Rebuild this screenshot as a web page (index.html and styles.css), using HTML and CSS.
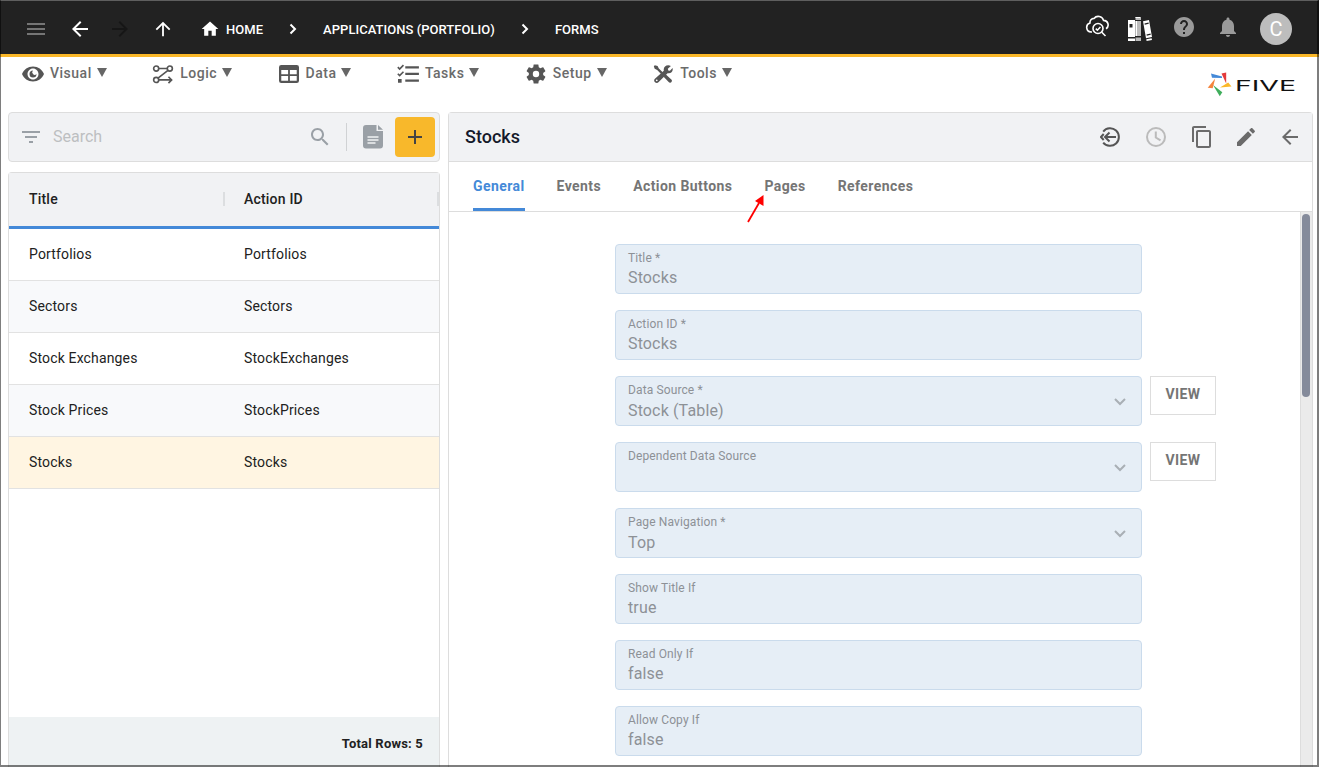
FILE: index.html
```html
<!DOCTYPE html>
<html lang="en">
<head>
    <meta charset="UTF-8">
    <meta name="viewport" content="width=device-width, initial-scale=1.0">
    <title>Five | Forms</title>
    <link rel="stylesheet" href="styles.css">
</head>
<body>
    <header class="topbar">
        <svg class="icon icon-menu" viewBox="0 0 24 24"><path d="M3 18h18v-2H3v2zm0-5h18v-2H3v2zm0-7v2h18V6H3z"/></svg>
        <svg class="icon icon-back" viewBox="0 0 24 24"><path d="M20 11H7.83l5.59-5.59L12 4l-8 8 8 8 1.41-1.41L7.83 13H20v-2z"/></svg>
        <svg class="icon icon-forward" viewBox="0 0 24 24"><path d="M12 4l-1.41 1.41L16.17 11H4v2h12.17l-5.58 5.59L12 20l8-8z"/></svg>
        <svg class="icon icon-up" viewBox="0 0 24 24"><path d="M4 12l1.41 1.41L11 7.83V20h2V7.83l5.58 5.59L20 12l-8-8-8 8z"/></svg>
        <nav class="crumbs">
            <svg class="icon-home" viewBox="0 0 24 24"><path d="M10 20v-6h4v6h5v-8h3L12 3 2 12h3v8z"/></svg>
            <a class="crumb">HOME</a>
            <svg class="crumb-arrow" viewBox="0 0 8 12"><path d="M1.5 1.5L6 6l-4.500 4.500"/></svg>
            <a class="crumb">APPLICATIONS (PORTFOLIO)</a>
            <svg class="crumb-arrow" viewBox="0 0 8 12"><path d="M1.500 1.500L6 6l-4.500 4.500"/></svg>
            <a class="crumb">FORMS</a>
        </nav>
        <div class="topbar-right">
            <svg class="icon-cloud" viewBox="0 0 24 24">
                <path d="M7 18H6a4.600 4.600 0 0 1-1-9 4 4 0 0 1 4-4.600 5.500 5.500 0 0 1 9.500 2 4.500 4.500 0 0 1 2.500 8.300"/>
                <circle cx="13" cy="14.500" r="5"/>
                <path d="M10.800 14.600l1.600 1.600 3-3.200M16.800 18.300l3.700 3.700"/>
            </svg>
            <svg class="icon-books" viewBox="0 0 24 24">
                <path fill="#fff" d="M0 3h7v17H0zM0 21.500h7V24H0zM15 4.300l6-1.300 3 17-6 1.300zM18.300 22.300l5.300-1.100.4 1.800-5.400 1z"/>
                <path fill="#bbb" d="M7.500 0h5.500v3H7.500zM7.500 4h5.500v15H7.500zM7.500 20.500h5.500V24H7.500z"/>
                <path fill="#fff" d="M7.500 0h4.500v1H7.500zM7.500 4h1.500v15H7.500z"/>
                <path fill="#222" d="M1.500 7h3v3.500h-3zM16.500 6.500l4-.9.3 1.200-4 .9zM18.500 17.500l4-.9.300 1.200-4 .9z"/>
            </svg>
            <svg class="icon icon-help" viewBox="0 0 24 24"><path d="M12 2C6.480 2 2 6.480 2 12s4.480 10 10 10 10-4.480 10-10S17.520 2 12 2zm1 17h-2v-2h2v2zm2.070-7.750l-.9.920C13.450 12.900 13 13.500 13 15h-2v-.5c0-1.100.45-2.100 1.170-2.830l1.240-1.260c.37-.36.590-.86.590-1.410 0-1.100-.9-2-2-2s-2 .9-2 2H8c0-2.210 1.790-4 4-4s4 1.790 4 4c0 .88-.36 1.680-.93 2.250z"/></svg>
            <svg class="icon icon-bell" viewBox="0 0 24 24"><path d="M12 22c1.100 0 2-.9 2-2h-4c0 1.100.89 2 2 2zm6-6v-5c0-3.070-1.640-5.640-4.500-6.320V4c0-.83-.67-1.500-1.500-1.500s-1.500.67-1.500 1.500v.68C7.630 5.360 6 7.920 6 11v5l-2 2v1h16v-1l-2-2z"/></svg>
            <div class="avatar">C</div>
        </div>
    </header>

    <div class="menubar">
        <div class="menu-item">
            <svg class="menu-icon" viewBox="1 2 22 20"><path d="M12 4.500C7 4.500 2.730 7.610 1 12c1.730 4.390 6 7.500 11 7.500s9.270-3.110 11-7.500c-1.730-4.390-6-7.500-11-7.500zM12 17.500c-3 0-5.500-2.500-5.500-5.500s2.500-5.500 5.500-5.500 5.500 2.500 5.500 5.500-2.500 5.500-5.500 5.500zm0-9a3.500 3.500 0 1 0 3.500 3.500 2 2 0 0 1-3.500-3.500z"/></svg>
            <span>Visual</span><i class="caret"></i>
        </div>
        <div class="menu-item">
            <svg class="menu-icon line" viewBox="1 1 23 22">
                <circle cx="5" cy="6" r="2.800"/><circle cx="20" cy="6" r="2.800"/><circle cx="5" cy="18.500" r="2.800"/>
                <path d="M8 6h9M18 8L7 16.500M8 18.500h14M18.500 15l3.500 3.500-3.500 3.500"/>
            </svg>
            <span>Logic</span><i class="caret"></i>
        </div>
        <div class="menu-item">
            <svg class="menu-icon" viewBox="0 1 24 22"><path fill-rule="evenodd" d="M3.500 2h17A2.500 2.500 0 0 1 23 4.500v15a2.500 2.500 0 0 1-2.500 2.500h-17A2.500 2.500 0 0 1 1 19.500v-15A2.500 2.500 0 0 1 3.500 2zM3.500 7.500v4.700H11V7.500zM13 7.500v4.700h7.500V7.500zM3.500 14.300v5H11v-5zM13 14.300v5h7.500v-5z"/></svg>
            <span>Data</span><i class="caret"></i>
        </div>
        <div class="menu-item">
            <svg class="menu-icon" viewBox="0 1.500 24 22"><path d="M9 4h15v2.500H9zM9 11h15v2.500H9zM9 18.500h15V21H9zM1 18h4v4H1z"/><path class="tick" d="M.8 5l2 2L7 2.800M.8 12.200l2 2L7 10"/></svg>
            <span>Tasks</span><i class="caret"></i>
        </div>
        <div class="menu-item">
            <svg class="menu-icon gear" viewBox="2 2 20 20"><path d="M19.140 12.940c.04-.3.060-.61.060-.94 0-.32-.02-.64-.07-.94l2.030-1.580c.18-.14.230-.41.120-.61l-1.920-3.320c-.12-.22-.37-.29-.59-.22l-2.390.96c-.5-.38-1.030-.7-1.620-.94l-.36-2.540c-.04-.24-.24-.41-.48-.41h-3.840c-.24 0-.43.17-.47.41l-.36 2.540c-.59.24-1.130.57-1.620.94l-2.390-.96c-.22-.08-.47 0-.59.220L2.740 8.870c-.12.210-.08.470.12.610l2.030 1.580c-.05.300-.09.630-.09.940s.02.640.07.940l-2.030 1.580c-.18.140-.23.410-.12.610l1.920 3.320c.12.220.37.290.59.220l2.390-.96c.5.380 1.030.7 1.620.94l.36 2.540c.05.240.24.410.48.410h3.840c.24 0 .44-.17.470-.41l.36-2.540c.59-.24 1.130-.56 1.620-.94l2.390.96c.22.080.47 0 .59-.22l1.920-3.320c.12-.22.070-.47-.12-.61l-2.010-1.580zM12 15.200A3.200 3.200 0 1 1 12 8.800a3.200 3.200 0 0 1 0 6.400z"/></svg>
            <span>Setup</span><i class="caret"></i>
        </div>
        <div class="menu-item">
            <svg class="menu-icon" viewBox="0 0 24 24">
                <path d="M2.200 1.500L5.500 2.300 7 5.300l5 5-2 2-5-5-3-1.500L1 2.700zM14 13l1.500-.5 6.800 6.300c1.500 1.700-1.300 4.800-3.200 3.200L13 15.500z"/>
                <path fill-rule="evenodd" d="M21.500 2.300l-3.700 3.500.500 2 2 .4 3.200-3.400c1 4.500-2.500 7.200-6 6.200L6.500 22c-2.200 2.300-6.800-1-4.500-4L13 8c-1-4.500 3.500-8 8.500-5.700zM4.500 18.500a1.100 1.100 0 1 0 0 2.200 1.100 1.100 0 0 0 0-2.200z"/>
            </svg>
            <span>Tools</span><i class="caret"></i>
        </div>
        <svg class="logo" viewBox="0 0 90 26">
            <path fill="#4489d8" d="M4 2.500l11 3v1.500L5 6.800z"/>
            <path fill="#e33b3b" d="M14.500 2.500L19.200 1.500v11z"/>
            <path fill="#fbb829" d="M24.500 15.500l-3.300-4-8.200 5z"/>
            <path fill="#3fae5c" d="M6 14l9.300 7.200-2.500 4z"/>
            <path fill="#f5843c" d="M8.200 7.500L.700 16.800l5 .5z"/>
            <text x="28" y="19.500" textLength="61" lengthAdjust="spacingAndGlyphs">FIVE</text>
        </svg>
    </div>

    <main class="content">
        <section class="list">
            <div class="searchbar">
                <svg class="icon icon-filter" viewBox="0 0 24 24"><path d="M10 18h4v-2h-4v2zM3 6v2h18V6H3zm3 7h12v-2H6v2z"/></svg>
                <input type="text" class="search-input" placeholder="Search">
                <svg class="icon icon-search" viewBox="0 0 24 24"><path d="M15.500 14h-.79l-.28-.27C15.410 12.590 16 11.110 16 9.500 16 5.910 13.090 3 9.500 3S3 5.910 3 9.500 5.910 16 9.500 16c1.610 0 3.090-.59 4.230-1.570l.27.280v.79l5 4.990L20.490 19l-4.990-5zm-6 0C7.010 14 5 11.990 5 9.500S7.010 5 9.500 5 14 7.010 14 9.500 11.990 14 9.500 14z"/></svg>
                <div class="divider"></div>
                <svg class="icon-doc" viewBox="0 0 20 24"><path d="M3 0h10.500v6H20v14.500a3 3 0 0 1-3 3H3a3 3 0 0 1-3-3V3a3 3 0 0 1 3-3z"/><path d="M15 0l5 4.800h-5z"/><path class="doc-lines" d="M4.500 12h11M4.500 15h11M4.500 18h8"/></svg>
                <button class="add-button"><svg viewBox="0 0 14 14"><path d="M7 0v14M0 7h14"/></svg></button>
            </div>
            <div class="grid">
                <div class="grid-row grid-head"><span>Title</span><span>Action ID</span></div>
                <div class="grid-row"><span>Portfolios</span><span>Portfolios</span></div>
                <div class="grid-row alt"><span>Sectors</span><span>Sectors</span></div>
                <div class="grid-row"><span>Stock Exchanges</span><span>StockExchanges</span></div>
                <div class="grid-row alt"><span>Stock Prices</span><span>StockPrices</span></div>
                <div class="grid-row selected"><span>Stocks</span><span>Stocks</span></div>
                <div class="grid-footer">Total Rows: 5</div>
            </div>
        </section>

        <section class="detail">
            <div class="detail-head">
                <h1>Stocks</h1>
                <div class="actions">
                    <svg class="act-return" viewBox="0 0 20 20"><path d="M3.200 4.500A8.800 8.800 0 1 1 3.200 15.500M16 10H5M9.500 5.500L5 10l4.500 4.500M3.700 7L1 10l2.700 3"/></svg>
                    <svg class="act-clock" viewBox="0 0 20 20"><circle cx="10" cy="10" r="9"/><path d="M9.800 4.500v6l4.700 2.800"/></svg>
                    <svg class="icon act-copy" viewBox="0 0 24 24"><path d="M16 1H4c-1.100 0-2 .9-2 2v14h2V3h12V1zm3 4H8c-1.100 0-2 .9-2 2v14c0 1.100.9 2 2 2h11c1.100 0 2-.9 2-2V7c0-1.100-.9-2-2-2zm0 16H8V7h11v14z"/></svg>
                    <svg class="icon act-edit" viewBox="0 0 24 24"><path d="M3 17.250V21h3.750L17.810 9.940l-3.750-3.750L3 17.250zM20.710 7.040c.39-.39.390-1.020 0-1.410l-2.340-2.340c-.39-.39-1.020-.39-1.410 0l-1.830 1.830 3.750 3.750 1.830-1.830z"/></svg>
                    <svg class="icon act-back" viewBox="0 0 24 24"><path d="M20 11H7.830l5.590-5.590L12 4l-8 8 8 8 1.410-1.410L7.830 13H20v-2z"/></svg>
                </div>
            </div>
            <div class="tabs">
                <a class="tab active">General</a>
                <a class="tab">Events</a>
                <a class="tab">Action Buttons</a>
                <a class="tab">Pages
                    <svg class="pointer" viewBox="0 0 18 30"><path d="M1 28L12 9" stroke="#f00" stroke-width="1.800"/><path d="M16.500 1v11L8 7z" fill="#f00"/></svg>
                </a>
                <a class="tab">References</a>
            </div>
            <div class="form-area">
                <form class="form">
                    <div class="field-row"><div class="field"><label>Title *</label><p>Stocks</p></div></div>
                    <div class="field-row"><div class="field"><label>Action ID *</label><p>Stocks</p></div></div>
                    <div class="field-row">
                        <div class="field select"><label>Data Source *</label><p>Stock (Table)</p><svg class="chevron" viewBox="0 0 12 8"><path d="M1 1l5 5 5-5"/></svg></div>
                        <button type="button" class="view-button">VIEW</button>
                    </div>
                    <div class="field-row">
                        <div class="field select"><label>Dependent Data Source</label><p></p><svg class="chevron" viewBox="0 0 12 8"><path d="M1 1l5 5 5-5"/></svg></div>
                        <button type="button" class="view-button">VIEW</button>
                    </div>
                    <div class="field-row"><div class="field select"><label>Page Navigation *</label><p>Top</p><svg class="chevron" viewBox="0 0 12 8"><path d="M1 1l5 5 5-5"/></svg></div></div>
                    <div class="field-row"><div class="field"><label>Show Title If</label><p>true</p></div></div>
                    <div class="field-row"><div class="field"><label>Read Only If</label><p>false</p></div></div>
                    <div class="field-row"><div class="field"><label>Allow Copy If</label><p>false</p></div></div>
                </form>
                <div class="scrollbar"><div class="thumb"></div></div>
            </div>
        </section>
    </main>
    <div class="frame"></div>
</body>
</html>
```
FILE: styles.css
```css
* {
    box-sizing: border-box;
}

body {
    margin: 0;
    height: 767px;
    display: flex;
    flex-direction: column;
    overflow: hidden;
    position: relative;
    background-color: #fff;
    font-family: Roboto, "Liberation Sans", sans-serif;
    color: #212121;
}

svg {
    display: block;
    flex: none;
}

.icon {
    width: 24px;
    height: 24px;
    fill: currentColor;
}

/* window outline, drawn over everything */
.frame {
    position: absolute;
    inset: 0;
    border: solid rgba(0, 0, 0, 0.5);
    border-width: 0 2px 2px 1px;
    border-top: 1px solid #5f5f5f;
    pointer-events: none;
}

/* top bar */
.topbar {
    flex: none;
    height: 57px;
    padding: 1px 27px 0 24px;
    display: flex;
    align-items: center;
    background-color: #222;
    border-bottom: 3px solid #fbb829;
    color: #fff;
}

.topbar .icon {
    margin-top: 2px;
}

.icon-menu {
    color: #757575;
    margin-right: 20px;
}

.icon-back {
    margin-right: 16px;
}

.icon-forward {
    color: #161616;
    margin-right: 19px;
}

.topbar .icon-up {
    width: 22px;
    height: 22px;
    margin-left: 1px;
}

.crumbs {
    display: flex;
    align-items: center;
    margin: 3px 0 0 26px;
    font-size: 13px;
    font-weight: 500;
    letter-spacing: 0.04px;
}

.icon-home {
    width: 20px;
    height: 20px;
    fill: #fff;
    margin-right: 6px;
}

.crumb-arrow {
    width: 8px;
    height: 12px;
    margin: 0 26px;
    fill: none;
    stroke: #fff;
    stroke-width: 2;
}

.topbar-right {
    margin-left: auto;
    display: flex;
    align-items: center;
}

.icon-cloud {
    width: 24px;
    height: 24px;
    margin: 0 19px 4px 0;
    fill: none;
    stroke: #fff;
    stroke-width: 1.6;
}

.icon-books {
    width: 24px;
    height: 24px;
    margin: 2px 20px 0 0;
}

.topbar .icon-help,
.topbar .icon-bell {
    color: #9a9a9a;
    margin: 0 20px 2px 0;
}

.avatar {
    width: 32px;
    height: 32px;
    margin-top: 3px;
    border-radius: 50%;
    background-color: #bdbdbd;
    color: #fff;
    font-size: 20px;
    line-height: 33px;
    text-align: center;
}

/* menu */
.menubar {
    flex: none;
    height: 55px;
    padding: 5px 22px 0;
    display: flex;
    align-items: flex-start;
}

.menu-item {
    display: flex;
    align-items: center;
    height: 21px;
    margin-right: 45px;
    font-size: 14px;
    font-weight: 500;
    letter-spacing: 0.5px;
    color: #6b6b6b;
}

.menu-icon {
    width: 22px;
    height: 20px;
    margin: 3px 6px 0 0;
    fill: #555;
}

.menu-icon.line,
.menu-icon .tick {
    fill: none;
    stroke: #555;
    stroke-width: 1.8;
}

.caret {
    margin-left: 5px;
    border: 5px solid transparent;
    border-top: 9px solid #666;
    border-bottom: 0;
}

.menu-item + .menu-item {
    margin-left: 0.5px;
}

.logo {
    width: 90px;
    height: 26px;
    margin: 9px 0 0 auto;
}

.logo text {
    font-family: Inter, sans-serif;
    font-size: 14px;
    fill: #111;
}

/* content */
.content {
    flex: 1;
    min-height: 0;
    display: flex;
    gap: 8px;
    padding: 0 6px 0 8px;
}

.list {
    width: 432px;
    display: flex;
    flex-direction: column;
    gap: 10px;
}

.searchbar {
    flex: none;
    height: 50px;
    padding: 0 4px 0 10px;
    display: flex;
    align-items: center;
    background-color: #f1f2f4;
    border: 1px solid #ddd;
    border-radius: 4px;
    color: #9aa0a6;
}

.search-input {
    flex: 1;
    min-width: 0;
    margin-left: 10px;
    padding: 0 0 2px;
    border: none;
    outline: none;
    background: none;
    font: 16px Roboto, sans-serif;
}

.search-input::placeholder {
    color: #bdbfc1;
}

.divider {
    width: 1px;
    height: 28px;
    margin: 0 16px 0 14px;
    background-color: #d0d2d4;
}

.icon-doc {
    width: 20px;
    height: 24px;
    margin-right: 12px;
    fill: #9aa0a6;
}

.doc-lines {
    stroke: #f1f2f4;
    stroke-width: 1.4;
}

.add-button {
    width: 40px;
    height: 40px;
    padding: 0 0 0 13px;
    border: none;
    border-radius: 4px;
    background-color: #f8b82b;
}

.add-button svg {
    width: 14px;
    height: 14px;
    stroke: #444;
    stroke-width: 2;
}

.grid {
    flex: 1;
    display: flex;
    flex-direction: column;
    border: 1px solid #ddd;
    border-bottom: none;
    border-radius: 4px 4px 0 0;
}

.grid-row {
    flex: none;
    display: grid;
    grid-template-columns: 216px 214px;
    align-items: center;
    height: 52px;
    padding-bottom: 2px;
    border-bottom: 1px solid #e2e2e2;
    font-size: 14px;
    letter-spacing: 0.15px;
}

.grid-row span {
    padding-left: 20px;
}

.grid-row span + span {
    padding-left: 19px;
}

.grid-head {
    height: 56px;
    background-color: #f1f2f4;
    border-bottom: 3px solid #4489d8;
    font-weight: 500;
    letter-spacing: 0.2px;
}

.grid-head span {
    line-height: 14px;
    border-right: 2px solid #dcdee0;
}

.alt {
    background-color: #f8f9fb;
}

.selected {
    background-color: #fff5e2;
}

.grid-footer {
    height: 50px;
    margin-top: auto;
    padding: 19px 16px 0 0;
    background-color: #eef2f3;
    font-size: 13px;
    font-weight: 700;
    line-height: 16px;
    letter-spacing: 0.2px;
    text-align: right;
}

/* detail panel */
.detail {
    flex: 1;
    display: flex;
    flex-direction: column;
    border: 1px solid #ddd;
    border-bottom: none;
    border-radius: 4px 4px 0 0;
}

.detail-head {
    flex: none;
    height: 49px;
    padding: 0 10px 0 16px;
    display: flex;
    align-items: center;
    justify-content: space-between;
    background-color: #f1f2f4;
    border-bottom: 1px solid #ddd;
}

h1 {
    margin: 0;
    padding-bottom: 2px;
    font-size: 18px;
    font-weight: 500;
    color: #14192b;
}

.actions {
    display: flex;
    align-items: center;
    color: #6b6b6b;
}

.act-return,
.act-clock {
    width: 20px;
    height: 20px;
    margin-right: 26px;
    fill: none;
    stroke: #555;
    stroke-width: 2;
}

.act-clock {
    margin-right: 24px;
    stroke: #bbb;
}

.act-copy,
.act-edit {
    margin-right: 20px;
}

.tabs {
    flex: none;
    height: 50px;
    padding-left: 24px;
    display: flex;
    gap: 32px;
    border-bottom: 1px solid #ddd;
}

.tab {
    position: relative;
    height: 49px;
    line-height: 48px;
    font-size: 14px;
    font-weight: 700;
    letter-spacing: 0.42px;
    color: #757575;
}

.tab.active {
    color: #4489d8;
    border-bottom: 3px solid #4489d8;
    border-radius: 2px 2px 0 0;
}

.pointer {
    position: absolute;
    left: -17px;
    top: 32px;
    width: 18px;
    height: 30px;
}

.form-area {
    flex: 1;
    min-height: 0;
    display: flex;
    justify-content: space-between;
}

.form {
    padding: 32px 0 0 166px;
    display: flex;
    flex-direction: column;
    gap: 16px;
}

.field-row {
    flex: none;
    display: flex;
    gap: 8px;
}

.field {
    position: relative;
    width: 527px;
    height: 50px;
    padding: 5px 12px 0;
    background-color: #e6eef6;
    border: 1px solid #cadbec;
    border-radius: 4px;
    color: #8d9196;
}

.field label {
    display: block;
    font-size: 12px;
    line-height: 16px;
    letter-spacing: 0.12px;
}

.field p {
    margin: 0;
    padding-top: 1px;
    font-size: 16px;
    line-height: 22px;
    letter-spacing: 0.14px;
}

.field.select p {
    padding-top: 2px;
}

.chevron {
    position: absolute;
    right: 15px;
    top: 21px;
    width: 12px;
    height: 8px;
    fill: none;
    stroke: #a9afb5;
    stroke-width: 2;
}

.view-button {
    width: 66px;
    height: 39px;
    padding: 0 0 3px;
    border: 1px solid #ddd;
    background-color: #fff;
    color: #757575;
    font: 700 14px Roboto, sans-serif;
    letter-spacing: 0.4px;
}

.scrollbar {
    width: 12px;
    padding: 2px 2px 0 1px;
    background-color: #ebebeb;
    border-left: 1px solid #ddd;
}

.thumb {
    height: 183px;
    border-radius: 4px;
    background-color: #858b9b;
}
```
